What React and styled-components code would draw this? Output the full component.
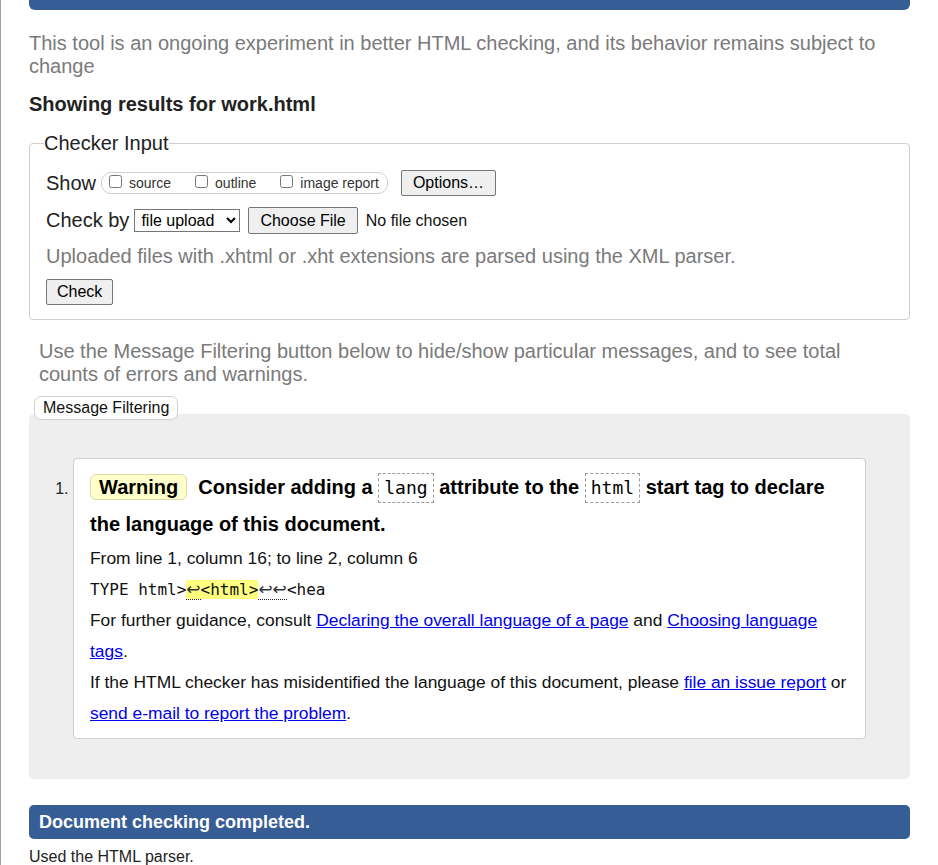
import styled, { createGlobalStyle } from "styled-components"

const GlobalStyle = createGlobalStyle`
  html, body {
    margin: 0;
    padding: 0;
    background: #fff;
  }
  body {
    font-family: "Liberation Sans", Arial, sans-serif;
    color: #111;
  }
`

export default function App() {
  return (
    <>
      <GlobalStyle />
      <Page>
        <TopBar />
        <Intro>
          This tool is an ongoing experiment in better HTML checking, and its behavior remains subject to change
        </Intro>
        <ResultsTitle>Showing results for work.html</ResultsTitle>

        <CheckerFieldset>
          <Legend>Checker Input</Legend>
          <FormRow>
            <RowLabel>Show</RowLabel>
            <ShowGroup>
              <CheckItem><input type="checkbox" />source</CheckItem>
              <CheckItem><input type="checkbox" />outline</CheckItem>
              <CheckItem><input type="checkbox" />image report</CheckItem>
            </ShowGroup>
            <Button $pad="11px" $ml="13px">Options…</Button>
          </FormRow>
          <FormRow>
            <RowLabel>Check by</RowLabel>
            <Select defaultValue="file">
              <option value="file">file upload</option>
              <option value="address">address</option>
              <option value="text">text input</option>
            </Select>
            <Button $pad="11px" $ml="8px" $h="27px">Choose File</Button>
            <FileName>No file chosen</FileName>
          </FormRow>
          <Hint>Uploaded files with .xhtml or .xht extensions are parsed using the XML parser.</Hint>
          <FormRow>
            <Button $pad="10px">Check</Button>
          </FormRow>
        </CheckerFieldset>

        <FilterNote>
          Use the Message Filtering button below to hide/show particular messages, and to see total counts of errors and warnings.
        </FilterNote>
        <FilterButton>Message Filtering</FilterButton>

        <ResultsArea>
          <MessageList>
            <MessageItem>
              <Heading>
                <Badge>Warning</Badge>
                Consider adding a <CodeName>lang</CodeName> attribute to the <CodeName>html</CodeName> start tag to declare the language of this document.
              </Heading>
              <Detail>From line 1, column 16; to line 2, column 6</Detail>
              <Extract>
                TYPE html&gt;<Highlight><BreakMark>↩</BreakMark>&lt;html&gt;</Highlight><BreakMark>↩↩</BreakMark>&lt;hea
              </Extract>
              <Detail>
                For further guidance, consult <Link href="#">Declaring the overall language of a page</Link> and <Link href="#">Choosing language tags</Link>.
              </Detail>
              <Detail>
                If the HTML checker has misidentified the language of this document, please <Link href="#">file an issue report</Link> or <Link href="#">send e-mail to report the problem</Link>.
              </Detail>
            </MessageItem>
          </MessageList>
        </ResultsArea>

        <DoneBar>Document checking completed.</DoneBar>
        <Footer>Used the HTML parser.</Footer>
      </Page>
    </>
  )
}

const Page = styled.div`
  border-left: 1px solid #a0a0a0;
  padding: 0 28px 0 28px;
  min-height: 100vh;
`
const TopBar = styled.div`
  height: 10px;
  background: #365d95;
  border-radius: 0 0 6px 6px;
`
const Intro = styled.p`
  margin: 22px 0 0 0;
  font-size: 20px;
  line-height: 23px;
  color: #7a7a7a;
`
const ResultsTitle = styled.h2`
  margin: 15px 0 0 0;
  font-size: 20px;
  line-height: 23px;
  font-weight: bold;
  color: #222;
`
const CheckerFieldset = styled.fieldset`
  margin: 16px 0 0 0;
  padding: 15px 16px 14px 16px;
  border: 1px solid #cfcfcf;
  border-radius: 4px;
  display: flex;
  flex-direction: column;
  gap: 11px;
  min-width: 0;
`
const Legend = styled.legend`
  font-size: 20px;
  line-height: 23px;
  padding: 0;
  margin-left: -2px;
  color: #222;
`
const FormRow = styled.div`
  display: flex;
  align-items: center;
  min-height: 26px;
`
const RowLabel = styled.span`
  font-size: 20px;
  line-height: 23px;
  color: #222;
  margin-right: 5px;
`
const ShowGroup = styled.div`
  display: flex;
  align-items: center;
  height: 20px;
  padding: 0 8px 0 7px;
  border: 1px solid #cfcfcf;
  border-radius: 10px;
  gap: 24px;
`
const CheckItem = styled.label`
  display: flex;
  align-items: center;
  font-size: 14px;
  color: #333;
  input {
    width: 13px;
    height: 13px;
    margin: 0 7px 4px 0;
  }
`
const Button = styled.button`
  font-family: "Liberation Sans", Arial, sans-serif;
  font-size: 16px;
  line-height: 18px;
  height: ${(p) => p.$h || "26px"};
  padding: 0 ${(p) => p.$pad};
  margin-left: ${(p) => p.$ml || "0"};
  color: #000;
  background: #efefef;
  border: 1px solid #767676;
  border-radius: 2px;
`
const Select = styled.select`
  font-family: "Liberation Sans", Arial, sans-serif;
  font-size: 16px;
  height: 23px;
  width: 106px;
  padding: 0 0 0 2px;
  color: #000;
  background: #fff;
  border: 1px solid #767676;
  border-radius: 0;
`
const FileName = styled.span`
  font-size: 16px;
  margin-left: 8px;
  color: #111;
`
const Hint = styled.p`
  margin: 0;
  font-size: 20px;
  line-height: 23px;
  color: #7a7a7a;
`
const FilterNote = styled.p`
  margin: 20px 0 0 0;
  padding: 0 12px 0 10px;
  font-size: 20px;
  line-height: 23px;
  color: #7a7a7a;
`
const FilterButton = styled.button`
  position: relative;
  z-index: 1;
  display: block;
  margin: 10px 0 -6px 5px;
  height: 24px;
  padding: 0 8px;
  font-family: "Liberation Sans", Arial, sans-serif;
  font-size: 16px;
  color: #111;
  background: #fff;
  border: 1px solid #cfcfcf;
  border-radius: 7px;
`
const ResultsArea = styled.section`
  background: #eeeeee;
  border-radius: 5px;
  padding: 44px 44px 40px 44px;
`
const MessageList = styled.ol`
  margin: 0;
  padding: 0;
  list-style: decimal outside;
`
const MessageItem = styled.li`
  background: #fff;
  border: 1px solid #cfcfcf;
  border-radius: 4px;
  padding: 10px 10px 9px 16px;
  font-size: 16px;
  &::marker {
    color: #222;
  }
`
const Heading = styled.p`
  margin: 0;
  font-size: 20px;
  line-height: 37px;
  font-weight: bold;
  color: #000;
`
const Badge = styled.strong`
  display: inline-block;
  line-height: 23px;
  padding: 1px 8px 0 8px;
  margin-right: 11px;
  background: #ffffcc;
  border: 1px solid #ddd8a8;
  border-radius: 6px;
`
const CodeName = styled.code`
  display: inline-block;
  font-family: "DejaVu Sans Mono", "Liberation Mono", monospace;
  font-weight: normal;
  font-size: 18px;
  line-height: 28px;
  padding: 0 5px;
  border: 1px dashed #999;
`
const Detail = styled.p`
  margin: 0;
  font-size: 17.4px;
  line-height: 31px;
  color: #111;
`
const Extract = styled.p`
  margin: 0;
  font-family: "DejaVu Sans Mono", "Liberation Mono", monospace;
  font-size: 16px;
  line-height: 31px;
  color: #111;
`
const Highlight = styled.mark`
  background: #ffff80;
  color: #111;
`
const BreakMark = styled.span`
  font-family: "DejaVu Sans", sans-serif;
  font-size: 17px;
  color: #333;
  border-bottom: 1px dotted #222;
`
const Link = styled.a`
  color: #0000ee;
  text-decoration: underline;
`
const DoneBar = styled.h2`
  margin: 26px 0 0 0;
  height: 34px;
  line-height: 34px;
  padding: 0 10px;
  font-size: 18px;
  font-weight: bold;
  color: #fff;
  background: #365d95;
  border-radius: 5px;
`
const Footer = styled.p`
  margin: 9px 0 0 0;
  font-size: 16px;
  color: #222;
`
